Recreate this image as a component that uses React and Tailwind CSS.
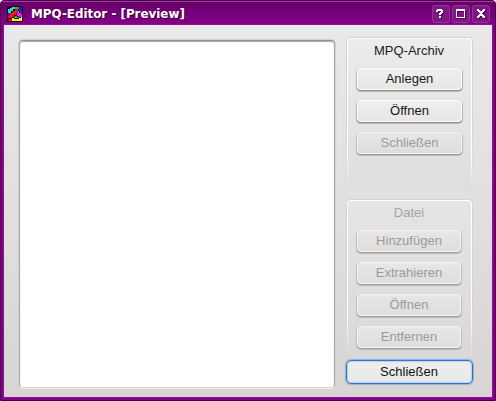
import React from 'react';

function AppIcon() {
  return (
    <svg width="16" height="16" viewBox="0 0 16 16" shapeRendering="crispEdges" className="shrink-0">
      <rect width="16" height="16" fill="#1c0018" />
      <path d="M1 3h2V2h2V1h3v2H6v2H4v2H1z" fill="#2ad9dc" />
      <path d="M8 1h4v2H8z" fill="#10c030" />
      <path d="M13 1h2v6h-2V5h-1V3h1z" fill="#1b20e6" />
      <path d="M6 5h2V3h3v2h-1v2H9v2H7v2H5v1H1v-2h1V9h1V7h2V6h1z" fill="#f0141c" />
      <path d="M11 5h1v2h2v1h1v3h-3v-1h-2V6h1z" fill="#f51be9" />
      <path d="M1 7h2v2H1z" fill="#1b20e6" />
      <path d="M7 11h1v-1h2v1h2v1H7z" fill="#10c848" />
      <path d="M1 13h4v2H1z" fill="#c41024" />
      <path d="M5 12h2v1h5v-1h2v3H5z" fill="#fff21c" />
      <path d="M14 11h1v4h-1z" fill="#fff" />
    </svg>
  );
}

function TitleButton({ children }) {
  return (
    <div className="flex h-[18px] w-[18px] items-center justify-center rounded-[3px] border border-[#93359a] bg-[#7f1684]">
      <svg width="16" height="16" viewBox="0 0 16 16" fill="#fff" shapeRendering="crispEdges" className="drop-shadow-[1px_1px_0px_#4d0050]">
        {children}
      </svg>
    </div>
  );
}

function Button({ children, disabled }) {
  const look = disabled
    ? 'border-[#f6f5f5] from-[#e8e7e6] to-[#dfdedd] text-[#9b9a99] shadow-[0_1px_0px_0px_#9c9b9a,0_1px_1px_1px_#bcbbba]'
    : 'border-[#fcfcfc] from-[#f0efef] to-[#e7e6e5] text-[#171717] shadow-[0_1px_0px_0px_#908f8e,0_1px_1px_1px_#b6b5b4]';
  return (
    <button disabled={disabled} className={'block h-[22px] w-full rounded-[4px] border bg-linear-to-b p-0 text-center text-[13px] leading-5 ' + look}>
      {children}
    </button>
  );
}

function Group({ title, disabled, children }) {
  return (
    <section className="h-[155px] w-[127px] rounded-t-[5px] bg-linear-to-b from-[#d4d3d3] from-50% to-transparent px-px pt-px">
      <div className="h-full rounded-t-[4px] bg-linear-to-b from-white via-white via-75% to-[#dedddc] px-px pt-px">
        <div className={'h-full rounded-t-[3px] bg-linear-to-b pt-1 ' + (disabled ? 'from-[#e6e5e5] to-[#dad9d8] pl-[9px] pr-[10px]' : 'from-[#ececec] to-[#dfdedd] px-[9px]')}>
          <h2 className={'h-[25px] text-center text-[13px] leading-4 ' + (disabled ? 'text-[#a3a2a1]' : 'pr-px text-[#222]')}>{title}</h2>
          <div className="flex flex-col gap-[10px]">{children}</div>
        </div>
      </div>
    </section>
  );
}

export default function App() {
  return (
    <div className="flex h-[401px] w-[496px] flex-col overflow-hidden rounded-t-[4px] border border-[#430044] bg-[#85008a] font-['Liberation_Sans',Arial,sans-serif]">
      <header className="flex h-6 shrink-0 items-center border-t border-[#a438a6] bg-linear-to-b from-[#670069] to-[#86008a] pl-[6px] pr-[5px] pt-px">
        <AppIcon />
        <h1 className="ml-[8px] flex-1 whitespace-nowrap font-['DejaVu_Sans',sans-serif] text-[11.9px] font-bold leading-5 text-white [text-shadow:1px_1px_1px_#3b003e]">MPQ-Editor - [Preview]</h1>
        <div className="flex gap-[2px]">
          <TitleButton>
            <path d="M4 3h5v1h1v3H9v1H8v1H6V7h1V6h1V5H5v1H3V4h1zM6 10h2v2H6z" />
          </TitleButton>
          <TitleButton>
            <path fillRule="evenodd" d="M3 3h9v9H3zM4 5v6h7V5z" />
          </TitleButton>
          <TitleButton>
            <path d="M4 3h2v1h1v1h2V4h1V3h2v2h-1v1h-1v1H9v1h1v1h1v1h1v2h-2v-1H9v-1H7v1H6v1H4v-2h1V9h1V8h1V7H6V6H5V5H4z" />
          </TitleButton>
        </div>
      </header>
      <main className="mx-[3px] mb-[3px] flex min-h-0 flex-1 bg-linear-to-b from-[#e9e9e9] to-[#d7d6d5] pl-[15px] pt-3 outline outline-[#8f0f92]">
        <div className="mt-[3px] h-[348px] w-[316px] rounded-[4px] border border-b-[#d6d5d4] border-l-[#aaa9a8] border-r-[#aaa9a8] border-t-[#929190] bg-white shadow-[inset_0_1px_1px_#aaa,0_1px_0_#eee,0_0_1px_1px_#d1d0cf]" />
        <div className="ml-[11px] flex w-[127px] flex-col">
          <Group title="MPQ-Archiv">
            <Button>Anlegen</Button>
            <Button>Öffnen</Button>
            <Button disabled>Schließen</Button>
          </Group>
          <div className="mt-[7px]">
            <Group title="Datei" disabled>
              <Button disabled>Hinzufügen</Button>
              <Button disabled>Extrahieren</Button>
              <Button disabled>Öffnen</Button>
              <Button disabled>Entfernen</Button>
            </Group>
          </div>
          <button className="mt-[6px] block h-[24px] w-full rounded-[5px] border border-[#2f76cb] bg-linear-to-b from-[#eeeded] to-[#eae9e9] p-0 pr-px text-center text-[13px] leading-5 text-[#111] shadow-[0_0_1px_1px_#8fb0d8,inset_0_0_1px_1px_#bcd0e8]">Schließen</button>
        </div>
      </main>
    </div>
  );
}
